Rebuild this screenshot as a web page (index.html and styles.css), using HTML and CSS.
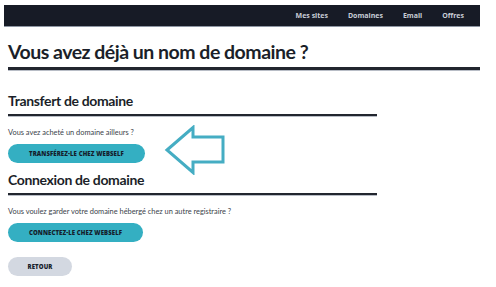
FILE: index.html
```html
<!DOCTYPE html>
<html lang="fr">
<head>
<meta charset="utf-8">
<title>Vous avez déjà un nom de domaine ?</title>
<link rel="stylesheet" href="styles.css">
</head>
<body>
<header class="topbar">
  <nav class="topnav">
    <a class="topnav-link">Mes sites</a>
    <a class="topnav-link">Domaines</a>
    <a class="topnav-link">Email</a>
    <a class="topnav-link">Offres</a>
  </nav>
</header>
<main class="page">
  <h1 class="page-title">Vous avez déjà un nom de domaine ?</h1>
  <section class="block block-transfer">
    <h2 class="block-title">Transfert de domaine</h2>
    <p class="block-text">Vous avez acheté un domaine ailleurs ?</p>
    <button class="btn btn-primary btn-transfer">TRANSFÉREZ-LE CHEZ WEBSELF</button>
    <svg class="hint-arrow" width="62" height="50" viewBox="0 0 62 50">
      <path d="M3 25 L29 2.5 L29 12 L59 12 L59 37 L29 37 L29 47.5 Z" fill="none" stroke="#45adc3" stroke-width="3" stroke-linejoin="miter"/>
    </svg>
  </section>
  <section class="block">
    <h2 class="block-title">Connexion de domaine</h2>
    <p class="block-text">Vous voulez garder votre domaine hébergé chez un autre registraire ?</p>
    <button class="btn btn-primary btn-connect">CONNECTEZ-LE CHEZ WEBSELF</button>
  </section>
  <button class="btn btn-secondary">RETOUR</button>
</main>
</body>
</html>
```
FILE: styles.css
```css
* { box-sizing: border-box; }
html, body { margin: 0; padding: 0; background: #ffffff; }
body {
  font-family: "Lato", "Open Sans", sans-serif;
  color: #1b1f29;
  width: 496px;
  height: 287px;
  overflow: hidden;
}
.topbar {
  margin: 5px 16px 0 4px;
  height: 22px;
  background: #171b26;
  border-bottom: 1px solid #8e96a3;
}
.topnav {
  display: flex;
  justify-content: flex-end;
  align-items: center;
  height: 21px;
  padding-right: 16px;
}
.topnav-link {
  font-family: "Open Sans", sans-serif;
  font-size: 7px;
  font-weight: 700;
  color: #c9ced8;
  margin-left: 20px;
}
.page {
  padding: 0 16px 0 8px;
}
.page-title {
  margin: 12px 0 0 0;
  font-size: 19.5px;
  font-weight: 700;
  line-height: 25px;
  letter-spacing: -0.5px;
  color: #1b1f29;
  padding-bottom: 3px;
  border-bottom: 3px solid #22262f;
  box-shadow: 0 1px 0 #b8bdc6;
}
.block {
  width: 369px;
  position: relative;
}
.block-transfer { margin-top: 21px; }
.block + .block { margin-top: 7px; }
.block-title {
  margin: 0;
  font-size: 14px;
  font-weight: 700;
  line-height: 20px;
  letter-spacing: -0.35px;
  color: #1b1f29;
  padding-bottom: 3px;
  border-bottom: 2px solid #22262f;
  box-shadow: 0 1px 0 #b8bdc6;
}
.block-text {
  margin: 12px 0 0 0;
  font-size: 7.4px;
  line-height: 10px;
  color: #3a3f4a;
}
.btn {
  display: block;
  border: none;
  border-radius: 10px;
  font-family: "Open Sans", sans-serif;
  font-size: 6px;
  font-weight: 800;
  letter-spacing: 0.1px;
  color: #15202b;
  height: 19px;
  padding: 0;
  text-align: center;
}
.btn-primary {
  background: #34afc2;
  margin-top: 6px;
}
.btn-transfer { width: 137px; }
.btn-connect { width: 135px; }
.btn-secondary {
  background: #d3d8e1;
  width: 64px;
  margin-top: 15px;
}
.hint-arrow {
  position: absolute;
  left: 156px;
  top: 34px;
}
```
